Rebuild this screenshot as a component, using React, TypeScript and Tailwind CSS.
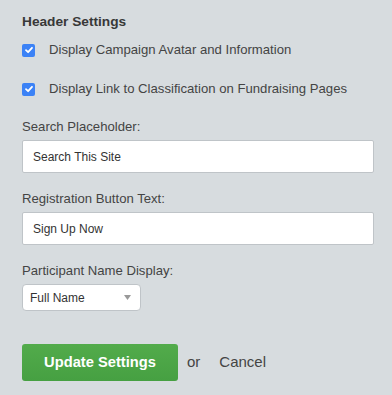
import React from "react";

function Check() {
  return (
    <span className="w-[13px] h-[13px] rounded-[2px] bg-[#3b82f6] flex items-center justify-center shrink-0">
      <svg width="10" height="10" viewBox="0 0 10 10">
        <path d="M2 5.2 L4.1 7.2 L8 2.8" fill="none" stroke="white" strokeWidth="1.8" strokeLinecap="round" strokeLinejoin="round" />
      </svg>
    </span>
  );
}

export default function App() {
  return (
    <div className="w-[392px] h-[395px] bg-[#d7dcdf] text-[#444] px-[22px] pt-[12px]" style={{ fontFamily: '"Liberation Sans", Arial, sans-serif' }}>
      <div className="text-[13.7px] font-bold text-[#383838] leading-[20px]">Header Settings</div>
      <div className="flex items-center mt-[10px] h-[16px]">
        <Check />
        <span className="ml-[14px] text-[13.15px] leading-[16px]">Display Campaign Avatar and Information</span>
      </div>
      <div className="flex items-center mt-[23px] h-[16px]">
        <Check />
        <span className="ml-[14px] text-[13.15px] leading-[16px]">Display Link to Classification on Fundraising Pages</span>
      </div>
      <div className="mt-[22px] text-[13.15px] leading-[16px]">Search Placeholder:</div>
      <div className="mt-[5px] h-[33px] w-[352px] bg-white border border-[#bfc4c8] rounded-[2px] flex items-center px-[10px] text-[12px] text-[#333]">Search This Site</div>
      <div className="mt-[18px] text-[13.15px] leading-[16px]">Registration Button Text:</div>
      <div className="mt-[5px] h-[33px] w-[352px] bg-white border border-[#bfc4c8] rounded-[2px] flex items-center px-[10px] text-[12px] text-[#333]">Sign Up Now</div>
      <div className="mt-[18px] text-[13.15px] leading-[16px]">Participant Name Display:</div>
      <div className="mt-[5px] h-[27px] w-[119px] bg-white border border-[#bfc4c8] rounded-[4px] flex items-center justify-between pl-[7px] pr-[9px] text-[12px] text-[#333]">
        <span>Full Name</span>
        <svg width="7" height="5" viewBox="0 0 7 5"><path d="M0 0 L7 0 L3.5 5 Z" fill="#999" /></svg>
      </div>
      <div className="mt-[33px] flex items-center">
        <button className="w-[156px] h-[37px] rounded-[3px] bg-gradient-to-b from-[#52ab4b] to-[#46a042] text-white font-bold text-[14.7px]">Update Settings</button>
        <span className="ml-[9px] text-[15px] text-[#444]">or</span>
        <span className="ml-[19px] text-[15px] text-[#444]">Cancel</span>
      </div>
    </div>
  );
}
